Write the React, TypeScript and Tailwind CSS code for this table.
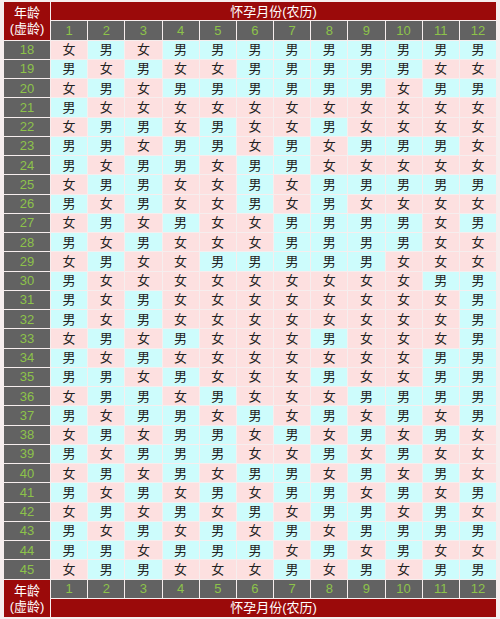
import React from "react";

const data: string[] = [
  "女男女男男男男男男男男男",
  "男女男女女男男男男男女女",
  "女男女男男男男男男女男男",
  "男女女女女女女女女女女女",
  "女男男女男女女男女女女女",
  "男男女男男女男女男男男女",
  "男女男男女男男女女女女女",
  "女男男女女男女男男男男男",
  "男女男女女男女男女女女女",
  "女男女男女女男男男男女男",
  "男女男女女女男男男男女女",
  "女男女女男男男男男女女女",
  "男女女女女女女女女女男男",
  "男女男女女女女女女女女男",
  "男女男女女女女女女女女男",
  "女男女男女女女男女女女男",
  "男女男女女女女女女女男男",
  "男男女男女女女男女女男男",
  "女男男女男女女女男男男男",
  "男女男男女男女男女男女男",
  "女男女男男女男女男女男女",
  "男女男男男女女男女男女女",
  "女男女男女男男女男女男女",
  "男女男女男女男男女男女男",
  "女男女男女男女男男女男女",
  "男女男女男女男女男男男男",
  "男男女男男男女男女男女女",
  "女男男女女女男女男女男男",
];

const months = Array.from({ length: 12 }, (_, i) => i + 1);
const font = { fontFamily: '"Liberation Sans", "Noto Sans CJK SC", sans-serif' };

function AgeLabel() {
  return (
    <div className="row-span-2 flex min-h-0 flex-col items-center justify-center gap-[3px] bg-[#9b0a0a] text-[13px] leading-none text-white">
      <span>年龄</span>
      <span>(虚龄)</span>
    </div>
  );
}

function MonthsTitle() {
  return (
    <div className="col-span-12 flex min-h-0 items-center justify-center bg-[#9b0a0a] text-[13px] leading-none text-white">
      怀孕月份(农历)
    </div>
  );
}

function MonthCells() {
  return (
    <>
      {months.map((m) => (
        <div
          key={m}
          className="flex min-h-0 items-center justify-center bg-[#626262] text-[13px] leading-none text-[#8dc24a]"
        >
          {m}
        </div>
      ))}
    </>
  );
}

export default function App() {
  return (
    <div
      className="h-[619px] w-[500px] overflow-hidden bg-[#f6eeee] px-[4px] py-[2px]"
      style={font}
    >
      <div className="grid h-full grid-cols-[46px_repeat(12,minmax(0,1fr))] grid-rows-[repeat(32,minmax(0,1fr))] gap-px">
        <AgeLabel />
        <MonthsTitle />
        <MonthCells />
        {data.map((row, r) => (
          <React.Fragment key={r}>
            <div className="flex min-h-0 items-center justify-center bg-[#626262] text-[13px] leading-none text-[#8dc24a]">
              {18 + r}
            </div>
            {Array.from(row).map((c, i) => (
              <div
                key={i}
                className={
                  c === "男"
                    ? "flex min-h-0 items-center justify-center bg-[#cdfcfc] text-[13px] leading-none text-[#222]"
                    : "flex min-h-0 items-center justify-center bg-[#fde0e0] text-[13px] leading-none text-[#222]"
                }
              >
                {c}
              </div>
            ))}
          </React.Fragment>
        ))}
        <AgeLabel />
        <MonthCells />
        <MonthsTitle />
      </div>
    </div>
  );
}
